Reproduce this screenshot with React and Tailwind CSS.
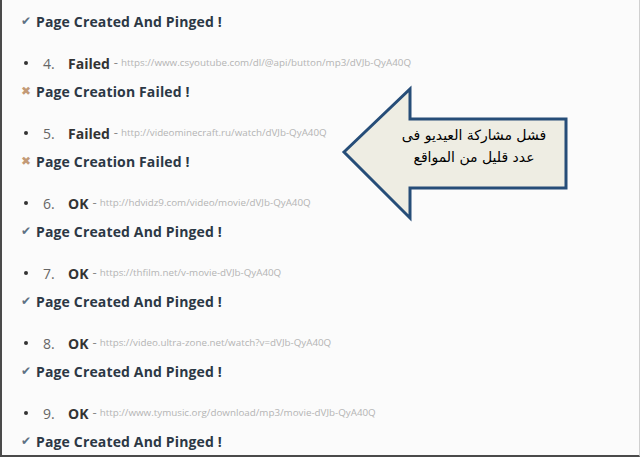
import React from 'react';

const items = [
  { n: 4, status: 'Failed', url: 'https://www.csyoutube.com/dl/@api/button/mp3/dVJb-QyA40Q' },
  { n: 5, status: 'Failed', url: 'http://videominecraft.ru/watch/dVJb-QyA40Q' },
  { n: 6, status: 'OK', url: 'http://hdvidz9.com/video/movie/dVJb-QyA40Q' },
  { n: 7, status: 'OK', url: 'https://thfilm.net/v-movie-dVJb-QyA40Q' },
  { n: 8, status: 'OK', url: 'https://video.ultra-zone.net/watch?v=dVJb-QyA40Q' },
  { n: 9, status: 'OK', url: 'http://www.tymusic.org/download/mp3/movie-dVJb-QyA40Q' },
];

const StatusLine = ({ ok }) => (
  <div className="h-7 flex items-center pl-[19px]">
    {ok ? (
      <span className="w-[14px] text-[12px] text-[#5d7184] leading-none">✔</span>
    ) : (
      <span className="w-[14px] text-[12px] text-[#c39a76] leading-none">✖</span>
    )}
    <span className="ml-[1px] text-[14px] font-bold text-[#2c3845] tracking-[0.15px]">
      {ok ? 'Page Created And Pinged !' : 'Page Creation Failed !'}
    </span>
  </div>
);

const ItemLine = ({ item }) => (
  <div className="h-7 mt-[14px] flex items-center">
    <span className="ml-[22px] w-[4px] h-[4px] rounded-full bg-[#333]" />
    <span className="ml-[15px] w-[25px] text-[14px] text-[#666]">{item.n}.</span>
    <span className="text-[14px] font-bold text-[#333]">{item.status}</span>
    <span className="ml-[4px] text-[13px] text-[#888]">-</span>
    <span className="ml-[3px] text-[9.8px] text-[#b4b4b4]">{item.url}</span>
  </div>
);

export default function App() {
  return (
    <div
      className="relative w-[640px] h-[457px] overflow-hidden bg-[#fbfbfb] border-l-2 border-b-2 border-[#4a4a4a] border-r border-r-[#d0d0d0]"
      style={{ fontFamily: '"Open Sans", "Liberation Sans", sans-serif' }}
    >
      <div className="pt-[7px]">
        <StatusLine ok />
        {items.map((it) => (
          <div key={it.n}>
            <ItemLine item={it} />
            <StatusLine ok={it.status === 'OK'} />
          </div>
        ))}
      </div>

      {/* callout arrow */}
      <svg className="absolute left-0 top-0" width="640" height="457">
        <polygon
          points="342,152 408,89 408,119 564,119 564,188 408,188 408,218"
          fill="#eeede3"
          stroke="#264d78"
          strokeWidth="3"
          strokeLinejoin="miter"
        />
      </svg>
      <div
        dir="rtl"
        className="absolute left-[382px] top-[124px] w-[180px] flex flex-col items-center text-[14px] leading-[22px] text-black"
        style={{ fontFamily: '"DejaVu Sans", sans-serif' }}
      >
        <span>فشل مشاركة العيديو فى</span>
        <span>عدد قليل من المواقع</span>
      </div>
    </div>
  );
}
